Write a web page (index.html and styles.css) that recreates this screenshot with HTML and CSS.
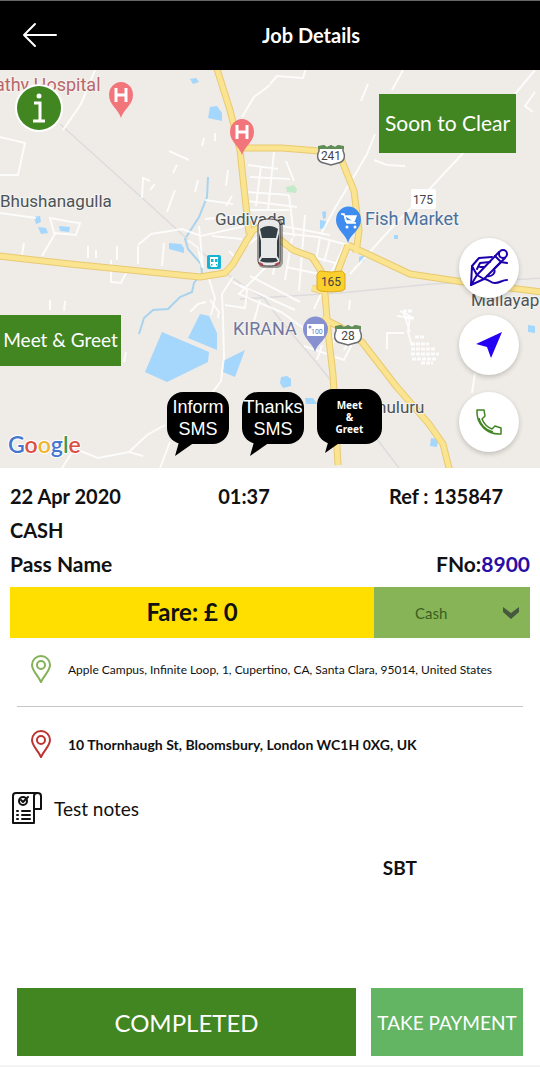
FILE: index.html
```html
<!DOCTYPE html>
<html lang="en">
<head>
  <meta charset="utf-8">
  <meta name="viewport" content="width=device-width, initial-scale=1">
  <title>Job Details</title>
  <link rel="stylesheet" href="styles.css">
</head>
<body>
  <div class="page">
    <header class="header">
      <button class="back-button" aria-label="Back">
        <svg width="36" height="26" viewBox="0 0 36 26" fill="none" stroke="#fff" stroke-width="2" stroke-linecap="round" stroke-linejoin="round">
          <path d="M34 13H2M13 2L2 13l11 11"/>
        </svg>
      </button>
      <h1 class="title">Job Details</h1>
    </header>

    <section class="map">
      <svg class="map-drawing" viewBox="0 70 540 398" preserveAspectRatio="xMidYMid slice">
        <rect x="-200" y="0" width="940" height="600" fill="#efece7"/>

        <!-- water -->
        <g fill="#a5d6fb">
          <path d="M162 332l47 20-1 10-41 20-22-10z"/>
          <path d="M200 314l9 2 8 17v17l-29-12z"/>
          <path d="M223 361l22-11-10 27-12-5z"/>
          <path d="M210 107l7-1 5 7v8l-14-3z"/>
          <path d="M169 243l12 1 3 4v5l-15-4z"/>
          <path d="M190 79l6-1 3 4-6 2z"/>
          <path d="M34 217l6-1 1 6-5 2zM38 227l8 1 2 5-7 1zM59 226l11 1-1 5-9-1z"/>
          <path d="M322 212l4-1v7l-3 1zM320 220l6 1-1 7-5 1z"/>
          <path d="M281 377l6-1 4 3v7l-8 2-3-5zM305 398h8l4 6h-11z"/>
          <path d="M481 438l7 1-1 8-7-1zM528 325l7 1v7l-7-1z" transform="translate(-50 0)"/>
          <path d="M528 325l7 1v7l-7-1z"/>
          <path d="M359 257l6-2-1 6-5 2zM394 235l4 0 0 4-4 0z"/>
        </g>
        <path d="M286 187l8-2 3 4-1 4-9-1z" fill="#c3ebcb"/>

        <!-- streams and railway -->
        <g fill="none" stroke="#a9d3ee" stroke-width="2">
          <path d="M208 177l-1 20-8 20-14 22 3 10 13 15 1 9-8 10-2 9-12 5-12 12-15 1-9 8-5 16"/>
        </g>
        <g fill="none" stroke="#dddbdd" stroke-width="1.5">
          <path d="M60 124l80 72 44 40 40 36 22 15 18 11 18 24 34 40 48 60 38 50"/>
          <path d="M240 299l100-6 92-9 115-6"/>
        </g>

        <!-- small streets -->
        <g fill="none" stroke="#fff" stroke-width="2" opacity=".85">
          <path d="M95 70l-14 34-18 26M0 137l25 6-7 32H0M0 213l36 5M50 218l22 4 8 1-4 12-22-2zM56 232l-14 24"/>
          <path d="M169 151l20 9M142 198l1-20 7 3M175 190l-8 22M270 85l-16 12-12 20M270 84l7-8 26 2 3-10"/>
          <path d="M138 245l13-11 31-5 19 7 44-10M138 246v18M164 243l-2 23M199 226l4 42M188 240l10 8 4 19"/>
          <path d="M111 260v22l10 1 6-12M117 246v14M96 250v8M24 243l-2 12M88 246v12M209 279l6 19-4 17M233 277l-11 17 1 23 1 40-3 24-18 24"/>
          <path d="M210 300l9 12-1 6M190 312l8-8 8-2M233 282l14 8-2 18-20-3M50 300v10M65 301l-1 10"/>
          <path d="M205 200l28 4M205 219l35-3M212 236l30 3M248 165l30 4M250 177l40 2M247 192l42 3M247 201l50 6M250 220l80 15M247 210l42 0"/>
          <path d="M261 166l-5 40M274 152l-6 58M289 195l5 42M279 235l-6 40M292 238l-7 42M305 215l-6 76M320 237l-5 30M330 240l-6 22M344 246l-30 63"/>
          <path d="M282 233l36 4 30 8M285 249l50 14M286 267l38 8M271 262l-32 32 42 18 28 20M240 285l55 25M250 276l50 26M260 300l-8 28"/>
          <path d="M403 70l-11 20M368 84l-7 17M375 134l-8 20-14 24-18 30-14 26M374 160l13 5 18 1M465 151l-40 43-30 30-45 50M535 70l-20 24M535 92l-10 14 8 6M350 300l-1 10"/>
          <path d="M286 161l8 20M283 240l-20 14M240 250l28-20M229 251l10 10M304 346l40 14 8-16-20-8M322 345l-5 15M334 340l-4 20M350 340l-6 10"/>
          <path d="M400 311l10 5-2 16 4 14M386 333h18M387 334v15M404 314l6 18M397 316l16 2"/>
          <path d="M475 373l-3 20M165 425l-18 10-18 17-31 6-20-8M62 468l14-22M160 468l10-26M129 452l14 4M126 352l-2 10"/>
          <path d="M204 138l-2 8M215 133v8M198 180l-3 12M177 165l-4 8M155 184l-5 6M228 170l-2 16M232 196l-6 10"/>
        </g>
        <g fill="none" stroke="#fff" stroke-width="3" stroke-dasharray="4 1" opacity=".85">
          <path d="M411 344h18M411 349h25M411 354h28M412 359h24M415 337h10M421 363h12M403 311h10M405 318h9"/>
        </g>

        <!-- main roads -->
        <g fill="none" stroke="#e8c974" stroke-width="7" stroke-linejoin="round">
          <path d="M216 66l14 44 10 40 4 38 5 45M242 148h40l50 4 10 9 12 30 5 40-3 22M-10 255l80 9 130 13 25-4 8-9 20-34 10-4 30 24 19 7 9 14 4 23 3 37 5 44 5 90M348 245l30 14 32 15 60 9 80 10M348 245l-6 15-8 22-12 9-10-3M322 318l20 10 20 14 34 44 33 38 14 20 6 24 8 12"/>
        </g>
        <g fill="none" stroke="#fbe48f" stroke-width="5" stroke-linejoin="round">
          <path d="M216 66l14 44 10 40 4 38 5 45M242 148h40l50 4 10 9 12 30 5 40-3 22M-10 255l80 9 130 13 25-4 8-9 20-34 10-4 30 24 19 7 9 14 4 23 3 37 5 44 5 90M348 245l30 14 32 15 60 9 80 10M348 245l-6 15-8 22-12 9-10-3M322 318l20 10 20 14 34 44 33 38 14 20 6 24 8 12"/>
        </g>

        <!-- place names -->
        <g class="map-label">
          <text x="-5" y="91" fill="#b9676b">athy Hospital</text>
          <text x="0" y="207" fill="#4c5359" class="town">Bhushanagulla</text>
          <text x="215" y="225" fill="#4c5359" class="town">Gudivada</text>
          <text x="365" y="225" fill="#49719f">Fish Market</text>
          <text x="233" y="335" fill="#7277a0">KIRANA</text>
          <text x="471" y="306" fill="#4c5359" class="town">Mallayap</text>
          <text x="377" y="413" fill="#4c5359" class="town">nuluru</text>
        </g>

        <!-- hospital pins -->
        <g id="hospital">
          <path d="M121 118c-2-8-12-13-12-23a12 13 0 0 1 24 0c0 10-10 15-12 23z" fill="#f3757c"/>
          <path d="M116 88v14M126 88v14M116 95h10" stroke="#fff" stroke-width="3"/>
        </g>
        <use href="#hospital" x="121" y="37"/>

        <!-- market pin -->
        <path d="M348 243c-2-9-12-13-12-23a12 13 0 0 1 25 0c0 10-11 14-13 23z" fill="#3f8cf0"/>
        <path d="M341 214h3l3 9h9M344 216h12l-2 5h-9" fill="#fff" stroke="#fff" stroke-width="1.5"/>
        <circle cx="347" cy="227" r="1.5" fill="#fff"/>
        <circle cx="355" cy="227" r="1.5" fill="#fff"/>

        <!-- atm pin -->
        <path d="M315 352c-2-9-12-13-12-23a12 12 0 0 1 25 0c0 10-11 14-13 23z" fill="#8791d0"/>
        <rect x="307" y="324" width="17" height="12" rx="1" fill="#fff"/>
        <circle cx="310" cy="327" r="1.5" fill="#8791d0"/>
        <text x="311" y="334" class="pin-text">100</text>

        <!-- train station -->
        <rect x="207" y="255" width="14" height="14" rx="2" fill="#17b3d3"/>
        <path d="M210 257h8v8l-1 2h-6l-1-2z" fill="#fff"/>
        <path d="M211 259h2.500v3H211zM215 259h2.500v3H215zM211 264h1.500v1.500H211zM216 264h1.500v1.500H216z" fill="#17b3d3"/>

        <!-- road numbers -->
        <g id="shield">
          <path d="M319 147l5-1 3 2 4-2 4 2 3-2 5 1 0 4c3 6 1 11-5 12l-7 2-7-2c-6-1-8-6-5-12z" fill="#fff" stroke="#6b6d70" stroke-width="1.500"/>
          <path d="M318 146l6-1 3 2 4-2 4 2 3-2 6 1v3h-26z" fill="#5e8e56"/>
        </g>
        <use href="#shield" x="17" y="180"/>
        <rect x="411" y="189" width="25" height="20" rx="2" fill="#fff"/>
        <path d="M320 271l11 1 11-1 3 3v15l-3 2-11 1-11-1-3-2v-15z" fill="#fbd02c" stroke="#d9a91c"/>
        <g class="road-number">
          <text x="331" y="160">241</text>
          <text x="348" y="340">28</text>
          <text x="423" y="204">175</text>
          <text x="331" y="286">165</text>
        </g>

        <!-- car -->
        <rect x="258" y="219" width="25" height="49" rx="6" fill="#000" opacity=".35"/>
        <path d="M258 226c0-5 4-7 11-7s11 2 11 7v34c0 5-3 6-11 6s-11-1-11-6z" fill="#e9e9e9" stroke="#444"/>
        <path d="M260 229c5-4 13-4 18 0l-2 9h-14z" fill="#343f45"/>
        <path d="M262 258h14l2 3c-5 2-13 2-18 0z" fill="#343f45"/>
        <path d="M259 233l2 8v15l-2 3zM279 233l-2 8v15l2 3z" fill="#343f45"/>
        <path d="M259 263l4 2M279 263l-4 2" stroke="#b2474b" stroke-width="2"/>

        <!-- Google mark -->
        <text x="8" y="453" class="google"><tspan fill="#4477d0">G</tspan><tspan fill="#dc4f44">o</tspan><tspan fill="#edb631">o</tspan><tspan fill="#4477d0">g</tspan><tspan fill="#3f9a55">l</tspan><tspan fill="#dc4f44">e</tspan></text>
      </svg>

      <button class="info-button" aria-label="Job information">
        <svg width="48" height="48" viewBox="0 0 48 48">
          <circle cx="24" cy="24" r="24" fill="#fff"/>
          <circle cx="24" cy="24" r="22" fill="#418621"/>
          <circle cx="24" cy="12" r="2.500" fill="#fff"/>
          <path d="M19 19h6v18M18 37h12" fill="none" stroke="#fff" stroke-width="3"/>
        </svg>
      </button>
      <button class="green-button soon-button">Soon to Clear</button>
      <button class="green-button meet-button">Meet &amp; Greet</button>

      <div class="messages">
        <button class="bubble">Inform<br>SMS</button>
        <button class="bubble">Thanks<br>SMS</button>
        <button class="bubble bubble-small">
          <span>Meet</span>
          <span>&amp;</span>
          <span>Greet</span>
        </button>
      </div>

      <div class="actions">
        <button class="round-button" aria-label="Signature">
          <svg width="42" height="42" viewBox="0 0 42 42" fill="none" stroke="#1d00ad" stroke-width="2" stroke-linecap="round" stroke-linejoin="round">
            <path d="M9 28L31 5M16 32l21-21M9 28l7 4L3 38z"/>
            <circle cx="35" cy="7" r="4"/>
            <path d="M27 9l6 6M3 38l1-19 7-8 13-1M4 19l5 9M22 15l-10 1-3 6M16 20h-4"/>
            <path d="M39 16l-6-1-6 6M26 22c2 4-2 8-7 7M16 32c5 0 6 4 11 4 5 0 7-3 12-3"/>
          </svg>
        </button>
        <button class="round-button" aria-label="Navigate">
          <svg width="28" height="28" viewBox="0 0 28 28" fill="#2400f5">
            <path d="M27 1L16 27l-4-11L1 13z"/>
          </svg>
        </button>
        <button class="round-button" aria-label="Call">
          <svg width="28" height="28" viewBox="0 0 28 28" fill="none" stroke="#3f8422" stroke-width="1.500" stroke-linejoin="round">
            <path d="M2 2h7l1 6-3 3c2 5 5 8 10 10l3-3 6 2v6C12 27 1 16 2 2z"/>
            <path d="M4 10c1 6 6 12 14 14"/>
          </svg>
        </button>
      </div>
    </section>

    <main class="details">
      <div class="job-row">
        <span>22 Apr 2020</span>
        <span>01:37</span>
        <span>Ref : 135847</span>
      </div>
      <div class="payment-type">CASH</div>
      <div class="passenger">
        <span>Pass Name</span>
        <span>FNo:<a href="#" class="flight">8900</a></span>
      </div>

      <div class="fare-row">
        <div class="fare">Fare: £ 0</div>
        <div class="pay-method">
          <select aria-label="Payment method">
            <option>Cash</option>
            <option>Card</option>
          </select>
          <svg class="chevron" width="16" height="12" viewBox="0 0 16 12">
            <path d="M0 0l8 6 8-6v5l-8 7-8-7z" fill="#46583e"/>
          </svg>
        </div>
      </div>

      <div class="address pickup">
        <svg width="20" height="28" viewBox="0 0 20 28" fill="none" stroke="#84b158" stroke-width="2">
          <path d="M10 27C7 20 1 16 1 10a9 9 0 0 1 18 0c0 6-6 10-9 17z"/>
          <circle cx="10" cy="10" r="4"/>
        </svg>
        <span>Apple Campus, Infinite Loop, 1, Cupertino, CA, Santa Clara, 95014, United States</span>
      </div>
      <div class="address dropoff">
        <svg width="20" height="28" viewBox="0 0 20 28" fill="none" stroke="#bd342f" stroke-width="2">
          <path d="M10 27C7 20 1 16 1 10a9 9 0 0 1 18 0c0 6-6 10-9 17z"/>
          <circle cx="10" cy="10" r="4"/>
        </svg>
        <span>10 Thornhaugh St, Bloomsbury, London WC1H 0XG, UK</span>
      </div>

      <div class="notes">
        <svg width="30" height="34" viewBox="0 0 30 34" fill="none" stroke="#111" stroke-width="2" stroke-linecap="round" stroke-linejoin="round">
          <path d="M26 2H4C2 2 1 3 1 5v27h21V5c0-4 7-4 7 0v13h-7"/>
          <circle cx="11" cy="10" r="4"/>
          <path d="M9 9l2 2 5-5M10 20h8M10 24h8M10 28h8M5 20h1M5 24h1M5 28h1"/>
        </svg>
        <span>Test notes</span>
      </div>
      <div class="company">SBT</div>
    </main>

    <footer class="footer">
      <button class="completed">COMPLETED</button>
      <button class="take-payment">TAKE PAYMENT</button>
    </footer>
  </div>
</body>
</html>
```
FILE: styles.css
```css
* {
  box-sizing: border-box;
}

body {
  margin: 0;
  font-family: Lato, "Liberation Sans", sans-serif;
  background-color: #fff;
  color: #111;
}

button {
  border: none;
  padding: 0;
  font-family: inherit;
  cursor: pointer;
}

svg {
  display: block;
}

.page {
  display: flex;
  flex-direction: column;
  min-height: 100vh;
}

.header {
  display: grid;
  grid-template-columns: 60px 1fr;
  align-items: center;
  height: 70px;
  padding-left: 22px;
  padding-bottom: 2px;
  background-color: #000;
  border-top: 1px solid #666;
}

.back-button {
  background: none;
}

.title {
  margin: 0;
  text-align: center;
  color: #fff;
  font-size: 20px;
  font-weight: 700;
}

/* Map */
.map {
  position: relative;
  height: 398px;
  overflow: hidden;
}

.map-drawing {
  width: 100%;
  height: 100%;
}

.map-label {
  font-family: Roboto, sans-serif;
  font-size: 18px;
  paint-order: stroke;
  stroke: #f5f3ef;
  stroke-width: 2px;
}

.town {
  font-size: 17px;
}

.road-number {
  font-family: Roboto, sans-serif;
  font-size: 12px;
  fill: #444;
  text-anchor: middle;
}

.pin-text {
  font-family: Roboto, sans-serif;
  font-size: 7px;
  fill: #6b76bd;
}

.google {
  font-family: Lato, sans-serif;
  font-size: 23px;
  font-weight: 600;
  paint-order: stroke;
  stroke: #fff;
  stroke-width: 2px;
}

.info-button {
  position: absolute;
  top: 14px;
  left: 15px;
  background: none;
}

.green-button {
  position: absolute;
  background-color: #418621;
  color: #fff;
}

.soon-button {
  top: 24px;
  right: 24px;
  width: 137px;
  height: 59px;
  padding-bottom: 2px;
  font-size: 21px;
}

.meet-button {
  top: 245px;
  left: 0;
  width: 121px;
  height: 51px;
  padding-bottom: 2px;
  font-size: 19px;
}

.messages {
  position: absolute;
  left: 167px;
  bottom: 24px;
  display: flex;
  align-items: flex-end;
  gap: 13px;
}

.bubble {
  position: relative;
  width: 62px;
  height: 52px;
  border-radius: 16px;
  background-color: #000;
  color: #fff;
  font-family: "Liberation Sans", Arial, sans-serif;
  font-size: 18px;
  line-height: 22px;
}

.bubble::after {
  content: "";
  position: absolute;
  left: 8px;
  top: 50px;
  width: 20px;
  height: 14px;
  background-color: #000;
  clip-path: polygon(20% 0, 100% 0, 0 100%);
}

.bubble-small {
  display: flex;
  flex-direction: column;
  justify-content: center;
  align-items: center;
  width: 65px;
  height: 55px;
  font-family: "Noto Sans", sans-serif;
  font-size: 10px;
  font-weight: 700;
  line-height: 12px;
}

.actions {
  position: absolute;
  top: 168px;
  right: 21px;
  display: flex;
  flex-direction: column;
  gap: 17px;
}

.round-button {
  display: flex;
  justify-content: center;
  align-items: center;
  width: 60px;
  height: 60px;
  border-radius: 50%;
  background-color: #fff;
  box-shadow: 0 2px 5px rgba(0, 0, 0, 0.2);
}

/* Job details */
.details {
  padding: 11px 10px 0;
}

.job-row {
  display: grid;
  grid-template-columns: 116px 1fr 168px;
  height: 34px;
  line-height: 34px;
  font-size: 20px;
  font-weight: 700;
  text-align: center;
  white-space: nowrap;
}

.job-row span:first-child {
  text-align: left;
}

.payment-type {
  line-height: 34px;
  font-size: 20px;
  font-weight: 700;
}

.passenger {
  display: flex;
  justify-content: space-between;
  height: 40px;
  line-height: 34px;
  font-size: 21px;
  font-weight: 700;
}

.flight {
  color: #2a0da5;
  text-decoration: none;
}

.fare-row {
  display: grid;
  grid-template-columns: 7fr 3fr;
  height: 51px;
}

.fare {
  background-color: #ffdf00;
  font-size: 24px;
  font-weight: 700;
  line-height: 50px;
  text-align: center;
}

.pay-method {
  position: relative;
}

.pay-method select {
  width: 100%;
  height: 100%;
  padding: 0 41px;
  border: none;
  border-radius: 0;
  appearance: none;
  background-color: #86b456;
  color: #3c5e1f;
  font-family: inherit;
  font-size: 15px;
}

.chevron {
  position: absolute;
  right: 11px;
  top: 20px;
  pointer-events: none;
}

.address {
  display: grid;
  grid-template-columns: 20px 1fr;
  align-items: center;
  gap: 17px;
  margin: 0 7px;
  padding-left: 14px;
}

.pickup {
  padding-top: 17px;
  padding-bottom: 23px;
  border-bottom: 1px solid #c6c6c6;
  font-size: 12px;
}

.dropoff {
  padding-top: 23px;
  padding-bottom: 20px;
  font-size: 14px;
  font-weight: 700;
}

.notes {
  display: flex;
  align-items: center;
  gap: 12px;
  margin-top: 13px;
  padding-left: 2px;
  font-size: 19px;
}

.company {
  margin-top: 31px;
  padding-right: 113px;
  text-align: right;
  font-size: 19px;
  font-weight: 700;
}

/* Bottom buttons */
.footer {
  display: grid;
  grid-template-columns: 339fr 152fr;
  gap: 15px;
  margin-top: auto;
  padding: 10px 17px 9px;
  border-bottom: 2px solid #f4f4f4;
}

.footer button {
  height: 68px;
  color: #fff;
}

.completed {
  background-color: #418621;
  font-size: 24px;
}

.footer .take-payment {
  background-color: #63b564;
  font-size: 19px;
  white-space: nowrap;
}
```
